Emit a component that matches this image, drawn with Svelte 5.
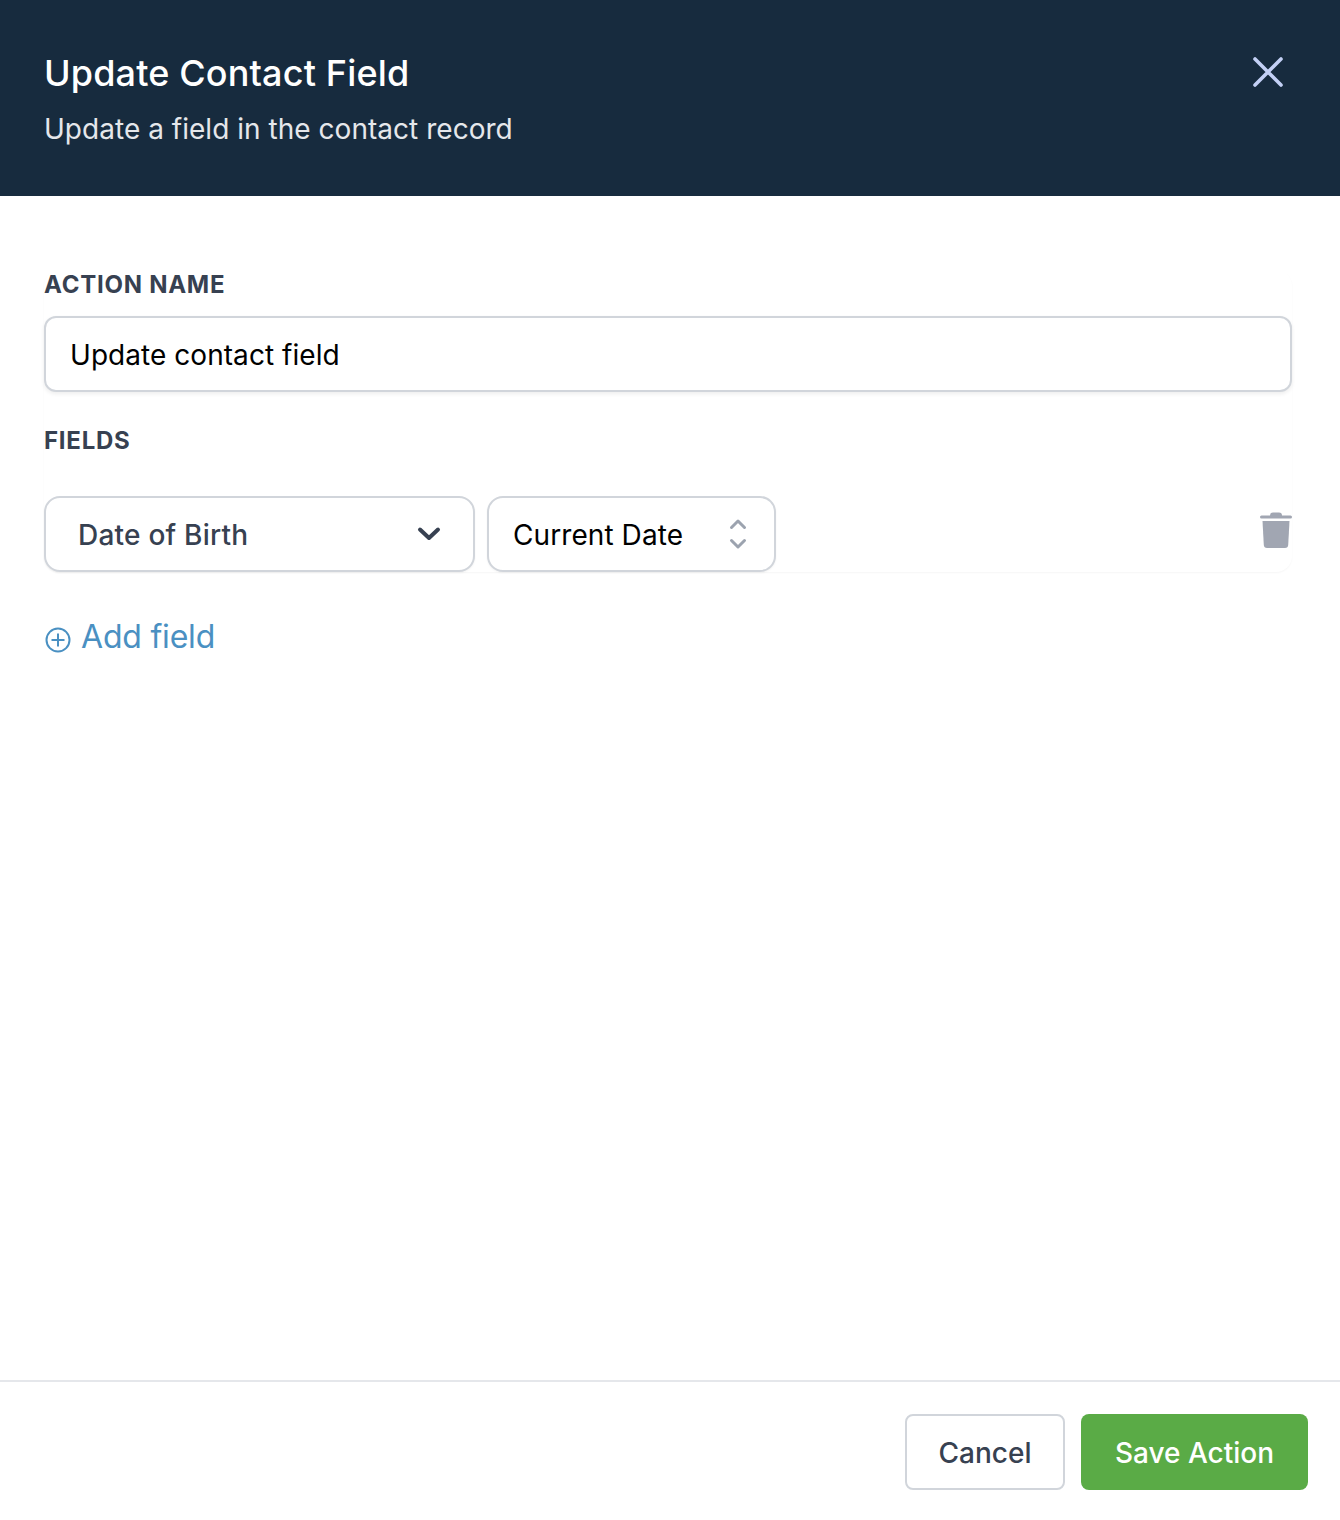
<script>
  let actionName = 'Update contact field';
</script>

<div class="panel">
  <header class="head">
    <div class="head-text">
      <h1>Update Contact Field</h1>
      <p>Update a field in the contact record</p>
    </div>
    <button class="close" aria-label="Close">
      <svg width="40" height="40" viewBox="0 0 40 40" fill="none" stroke="#c3d0f5" stroke-width="3.6" stroke-linecap="round"><path d="M7 7 33 33M33 7 7 33"/></svg>
    </button>
  </header>

  <main class="body">
    <section class="card">
      <div class="label first">ACTION NAME</div>
      <input class="name" bind:value={actionName} />
      <div class="label second">FIELDS</div>
      <div class="row">
        <div class="select one">
          <span>Date of Birth</span>
          <svg width="24" height="24" viewBox="0 0 24 24" fill="none" stroke="#374151" stroke-width="4" stroke-linecap="round" stroke-linejoin="round"><path d="M3 7.500 12 16 21 7.500"/></svg>
        </div>
        <div class="select two">
          <span>Current Date</span>
          <svg width="20" height="32" viewBox="0 0 20 32" fill="none" stroke="#9ca3af" stroke-width="3" stroke-linecap="round" stroke-linejoin="round"><path d="M3.500 9.500 10 3l6.500 6.500M3.500 22.500 10 29l6.500-6.500"/></svg>
        </div>
        <button class="trash" aria-label="Delete field">
          <svg width="32" height="36" viewBox="0 0 32 36" fill="#a1a6b2"><path d="M10 3.500Q10 .5 13 .5h6q3 0 3 3h8.500q1.500 0 1.500 1.500t-1.500 1.500H1.500Q0 6.500 0 5t1.500-1.500z"/><path d="M2.500 9h27l-1.300 24q-.2 3-3.200 3H7q-3 0-3.200-3z"/></svg>
        </button>
      </div>
    </section>

    <button class="add">
      <svg width="26" height="26" viewBox="0 0 26 26" fill="none" stroke="#4a90c2" stroke-width="2"><circle cx="13" cy="13" r="11.500"/><path d="M13 6.500v13M6.500 13h13"/></svg>
      <span>Add field</span>
    </button>
  </main>

  <footer class="foot">
    <button class="btn cancel">Cancel</button>
    <button class="btn save">Save Action</button>
  </footer>
</div>

<style>
  :global(body) {
    margin: 0;
    background: #fff;
  }
  .panel {
    width: 1340px;
    height: 1520px;
    display: flex;
    flex-direction: column;
    font-family: Inter, "Liberation Sans", sans-serif;
    background: #fff;
  }
  button {
    font-family: inherit;
    background: none;
    border: 0;
    padding: 0;
  }
  .head {
    height: 196px;
    box-sizing: border-box;
    background: #172b3e;
    padding: 50px 52px 0 44px;
    display: flex;
    justify-content: space-between;
    align-items: flex-start;
  }
  h1 {
    margin: 0;
    font-size: 36px;
    line-height: 46px;
    font-weight: 500;
    letter-spacing: 0.15px;
    color: #fff;
  }
  .head-text p {
    margin: 10px 0 0;
    font-size: 28px;
    line-height: 46px;
    letter-spacing: 0.03px;
    color: #e5e7eb;
  }
  .close {
    display: flex;
    margin-top: 2px;
  }
  .body {
    flex: 1;
    padding: 74px 48px 0 44px;
  }
  .card {
    height: 302px;
    box-sizing: border-box;
    border-radius: 16px;
    box-shadow: 0 1px 2px rgba(0, 0, 0, 0.04);
    display: flex;
    flex-direction: column;
  }
  .label {
    font-size: 24px;
    line-height: 30px;
    font-weight: 700;
    letter-spacing: 0.75px;
    color: #374151;
  }
  .first {
    margin-bottom: 16px;
  }
  .second {
    margin-top: 34px;
    margin-bottom: 40px;
  }
  .name {
    display: block;
    width: 100%;
    height: 76px;
    box-sizing: border-box;
    border: 2px solid #d1d5db;
    border-radius: 12px;
    padding: 1px 24px 0;
    font-family: inherit;
    font-size: 28px;
    letter-spacing: 0.05px;
    color: #000;
    outline: none;
    box-shadow: 0 2px 4px rgba(0, 0, 0, 0.07);
  }
  .row {
    display: flex;
    gap: 12px;
  }
  .select {
    height: 76px;
    box-sizing: border-box;
    border: 2px solid #d1d5db;
    border-radius: 16px;
    display: flex;
    align-items: center;
    justify-content: space-between;
    font-size: 28px;
    background: #fff;
    box-shadow: 0 1px 2px rgba(0, 0, 0, 0.05);
  }
  .select span {
    padding-top: 2px;
  }
  .one {
    width: 431px;
    padding: 0 32px;
    color: #374151;
    font-weight: 500;
    letter-spacing: 0.22px;
  }
  .two {
    width: 289px;
    padding: 0 26px 0 24px;
    color: #000;
    letter-spacing: 0.08px;
  }
  .trash {
    margin-left: auto;
    margin-top: 16px;
    height: 36px;
    display: flex;
  }
  .add {
    margin-top: 44px;
    display: flex;
    align-items: center;
    gap: 10px;
    font-size: 32px;
    line-height: 42px;
    letter-spacing: -0.2px;
    color: #4a90c2;
    font-weight: 400;
  }
  .add svg {
    margin-top: 6px;
    margin-left: 1px;
  }
  .foot {
    height: 140px;
    box-sizing: border-box;
    border-top: 2px solid #e5e7eb;
    padding: 32px 32px 0 0;
    display: flex;
    justify-content: flex-end;
    gap: 16px;
  }
  .btn {
    height: 76px;
    box-sizing: border-box;
    border-radius: 8px;
    padding-top: 2px;
    font-size: 28px;
    font-weight: 500;
  }
  .cancel {
    width: 160px;
    border: 2px solid #d1d5db;
    color: #374151;
    background: #fff;
  }
  .save {
    width: 227px;
    background: #5aab46;
    color: #fff;
  }
</style>
